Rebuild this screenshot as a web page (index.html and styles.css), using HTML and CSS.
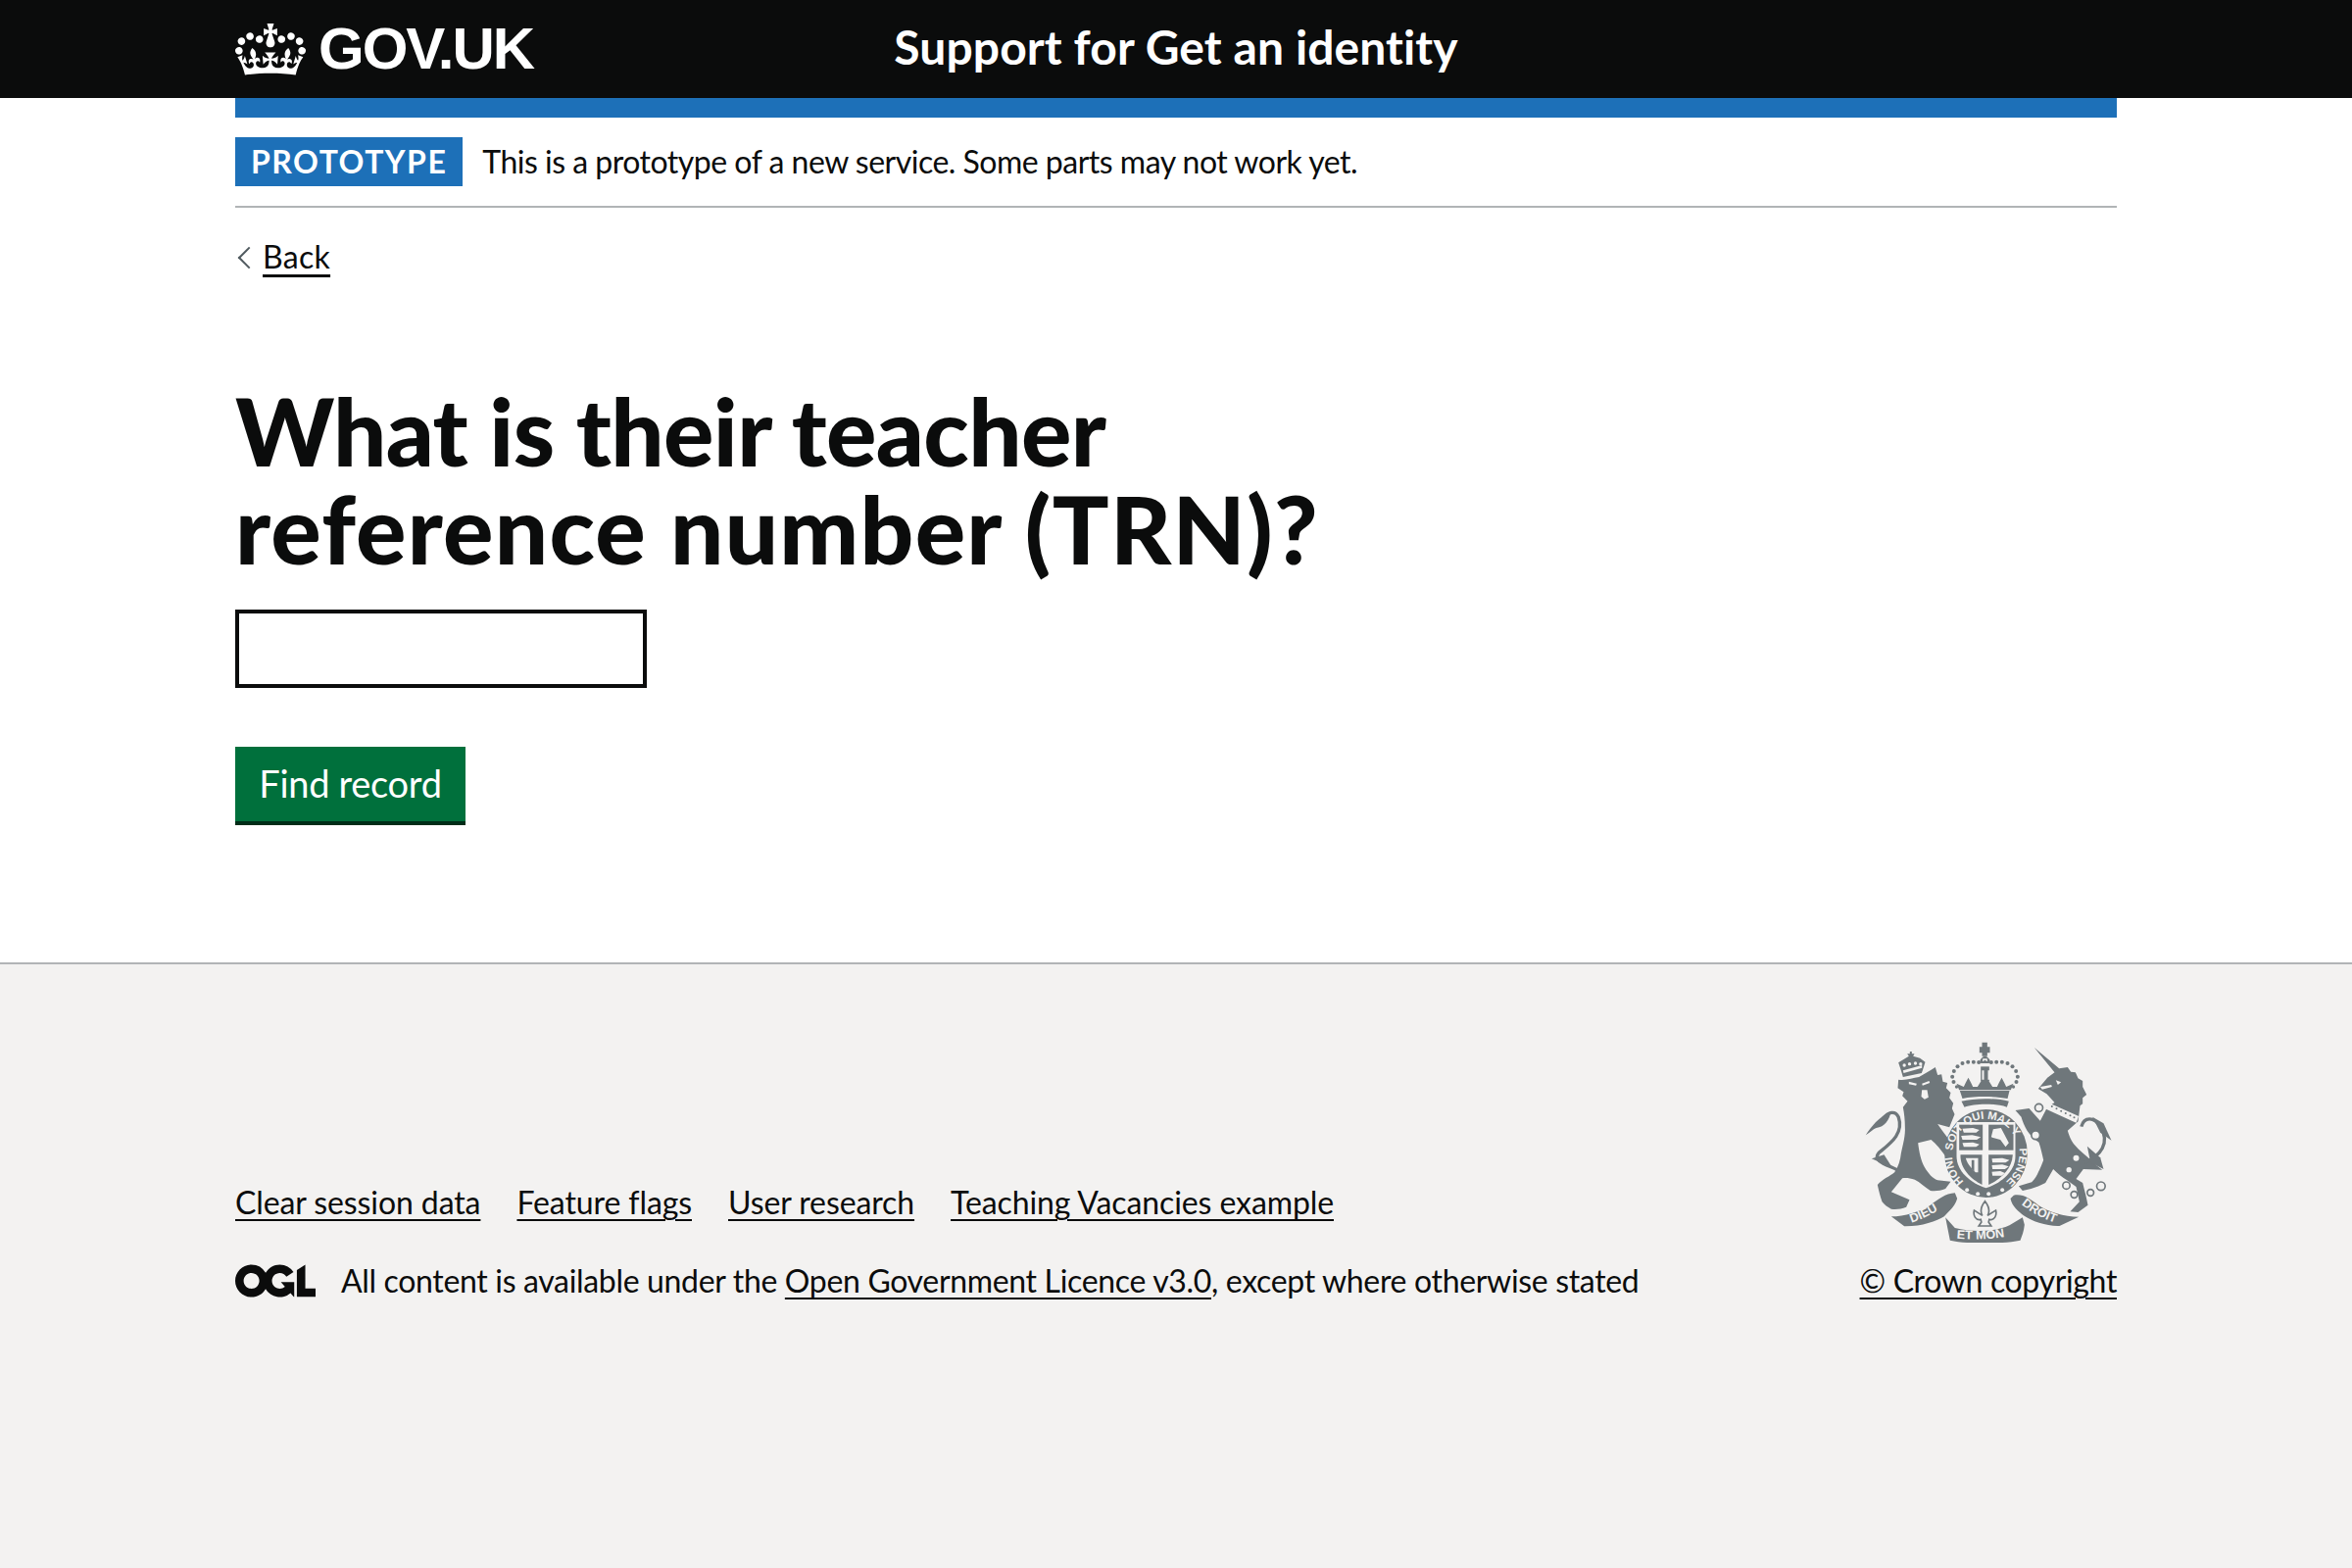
FILE: index.html
```html
<!DOCTYPE html>
<html lang="en">
<head>
<meta charset="utf-8">
<title>What is their teacher reference number (TRN)?</title>
<link rel="stylesheet" href="styles.css">
</head>
<body>
<header class="site-header">
  <div class="header-inner">
    <a class="logo" href="#">
      <svg class="crown" viewBox="0 0 132 97" aria-hidden="true"><path fill-rule="evenodd" d="M25 30.2c3.5 1.5 7.7-.2 9.1-3.7 1.5-3.6-.2-7.8-3.9-9.2-3.6-1.4-7.6.3-9.1 3.9-1.4 3.5.3 7.5 3.9 9zM9 39.5c3.6 1.5 7.8-.2 9.2-3.7 1.5-3.6-.2-7.8-3.9-9.1-3.6-1.5-7.6.2-9.1 3.8-1.4 3.5.3 7.5 3.8 9zM4.4 57.2c3.5 1.5 7.7-.2 9.1-3.8 1.5-3.6-.2-7.7-3.9-9.1-3.5-1.5-7.6.3-9.1 3.8-1.4 3.5.3 7.6 3.9 9.1zm38.3-21.4c3.5 1.5 7.7-.2 9.1-3.8 1.5-3.6-.2-7.7-3.9-9.1-3.6-1.5-7.6.3-9.1 3.8-1.3 3.6.4 7.7 3.9 9.1zm64.4-5.6c-3.6 1.5-7.8-.2-9.1-3.7-1.5-3.6.2-7.8 3.8-9.2 3.6-1.4 7.7.3 9.2 3.9 1.3 3.5-.4 7.5-3.9 9zm15.9 9.3c-3.6 1.5-7.7-.2-9.1-3.7-1.5-3.6.2-7.8 3.7-9.1 3.6-1.5 7.7.2 9.2 3.8 1.5 3.5-.3 7.5-3.8 9zm4.7 17.7c-3.6 1.5-7.8-.2-9.2-3.8-1.5-3.6.2-7.7 3.9-9.1 3.6-1.5 7.7.3 9.2 3.8 1.3 3.5-.4 7.6-3.9 9.1zM89.3 35.8c-3.6 1.5-7.8-.2-9.2-3.8-1.4-3.6.2-7.7 3.9-9.1 3.6-1.5 7.7.3 9.2 3.8 1.4 3.6-.3 7.7-3.9 9.1zM69.7 17.7l8.9 4.7V9.3l-8.9 2.8c-.2-.3-.5-.6-.9-.9L72.4 0H59.6l3.5 11.2c-.3.3-.6.5-.9.9l-8.8-2.8v13.1l8.8-4.7c.3.3.6.7.9.9l-5 15.4v.1c-.2.8-.4 1.6-.4 2.4 0 4.1 3.1 7.5 7 8.1h.2c.3 0 .7.1 1 .1.4 0 .7 0 1-.1h.2c4-.6 7.1-4.1 7.1-8.1 0-.8-.1-1.7-.4-2.4V34l-5.1-15.4c.4-.2.7-.6 1-.9zM66 92.8c16.9 0 32.8 1.1 47.1 3.2 4-16.9 8.9-26.7 14-33.5l-9.6-3.4c1 4.9 1.1 7.2 0 10.2-1.5-1.4-3-4.3-4.2-8.7L108.6 76c2.8-2 5-3.2 7.5-3.3-4.4 9.4-10 11.9-13.6 11.2-4.3-.8-6.3-4.6-5.6-7.9 1-4.7 5.7-5.9 8-.5 4.3-8.7-3-11.4-7.6-8.8 7.1-7.2 7.9-13.5 2.1-21.1-8 6.1-8.1 12.3-4.5 20.8-4.7-5.4-12.1-2.5-9.5 6.2 3.4-5.2 7.9-2 7.2 3.1-.6 4.3-6.4 7.8-13.5 7.2-10.3-.9-10.9-8-11.2-13.8 2.5-.5 7.1 1.8 11 7.3L80.2 60c-4.1 4.4-8 5.3-12.3 5.4 1.4-4.4 8-11.6 8-11.6H55.5s6.4 7.2 7.9 11.6c-4.2-.1-8-1-12.3-5.4l1.4 16.4c3.9-5.5 8.5-7.7 10.9-7.3-.3 5.8-.9 12.8-11.1 13.8-7.2.6-12.9-2.9-13.5-7.2-.7-5 3.8-8.3 7.1-3.1 2.7-8.7-4.6-11.6-9.4-6.2 3.7-8.5 3.6-14.7-4.6-20.8-5.8 7.6-5 13.9 2.2 21.1-4.7-2.6-11.9.1-7.7 8.8 2.3-5.5 7.1-4.2 8.1.5.7 3.3-1.3 7.1-5.7 7.9-3.5.7-9-1.8-13.5-11.2 2.5.1 4.7 1.3 7.5 3.3l-4.7-15.4c-1.2 4.4-2.7 7.2-4.3 8.7-1.1-3-.9-5.3 0-10.2l-9.5 3.4c5 6.9 9.9 16.7 14 33.5 14.8-2.1 30.8-3.2 47.7-3.2z"/></svg>
      <span class="logo-text">GOV.UK</span>
    </a>
    <a class="service-name" href="#">Support for Get an identity</a>
  </div>
</header>
<div class="container">
  <div class="blue-bar"></div>
  <div class="phase-banner">
    <strong class="tag">PROTOTYPE</strong>
    <span class="phase-text">This is a prototype of a new service. Some parts may not work yet.</span>
  </div>
  <a class="back-link" href="#">Back</a>
  <main class="main">
    <h1 class="heading"><label for="trn"><span class="line-one">What is their teacher</span><br><span class="line-two">reference number (TRN)?</span></label></h1>
    <input class="input" id="trn" type="text">
    <button class="button" type="button">Find record</button>
  </main>
</div>
<footer class="footer">
  <div class="footer-inner">
    <div class="footer-meta">
      <ul class="footer-links">
        <li><a class="flink" href="#">Clear session data</a></li>
        <li><a class="flink" href="#">Feature flags</a></li>
        <li><a class="flink" href="#">User research</a></li>
        <li><a class="flink" href="#">Teaching Vacancies example</a></li>
      </ul>
      <div class="licence">
        <svg class="ogl" viewBox="0 0 483.2 195.7" aria-hidden="true"><path d="M421.5 142.8V.1l-50.7 32.3v161.1h112.4v-50.7zm-122.3-9.6A47.12 47.12 0 0 1 221 97.8c0-26 21.1-47.1 47.1-47.1 16.7 0 31.4 8.7 39.7 21.8l42.7-27.2A97.63 97.63 0 0 0 268.1 0c-36.5 0-68.3 20.1-85.1 49.7A98 98 0 0 0 97.8 0C43.9 0 0 43.9 0 97.8s43.9 97.8 97.8 97.8c36.5 0 68.3-20.1 85.1-49.7a97.76 97.76 0 0 0 149.6 25.4l19.4 22.2h3v-87.8h-80l24.3 27.5zM97.8 145c-26 0-47.1-21.1-47.1-47.1s21.1-47.1 47.1-47.1 47.2 21 47.2 47S123.8 145 97.8 145"/></svg>
        <span class="licence-text">All content is available under the <a class="flink" href="#">Open Government Licence v3.0</a>, except where otherwise stated</span>
      </div>
    </div>
    <div class="copyright">
      <svg class="arms" viewBox="70 40 755 615" aria-hidden="true">
        <defs>
          <path id="ring-top" d="M338 374A102 108 0 0 1 538 356"/>
          <path id="ring-right" d="M542 366A102 110 0 0 1 486 478"/>
          <path id="ring-left" d="M372 468A102 108 0 0 1 336 388"/>
          <path id="rib-left" d="M212 594Q272 574 332 530"/>
          <path id="rib-mid" d="M350 642Q435 650 524 632"/>
          <path id="rib-right" d="M548 538Q600 580 664 598"/>
        </defs>
        <g class="a-dark">
          <!-- lion -->
          <path d="M172 156C195 160 215 150 235 148C252 138 270 128 285 118L292 142L304 140L308 162L322 166L318 182L332 196L328 212L340 228L336 244L344 262L328 302L292 292C310 318 330 342 346 368L340 396C330 400 322 398 316 390C302 372 288 352 272 340L232 350C236 380 240 402 252 424C264 444 276 458 292 464L332 468L316 490C302 496 284 498 270 496C252 484 238 470 222 462C208 458 196 456 184 458L150 500L206 524L196 546C180 552 166 554 150 552C138 546 130 540 122 530C116 512 112 496 108 478C124 460 146 452 160 440C172 422 178 402 180 382C186 354 194 326 192 300C192 280 190 260 186 240L200 222L184 206L188 194L170 182Z"/>
          <path class="a-line" d="M168 432C130 414 92 404 112 380C146 352 190 322 172 270C162 250 142 254 124 276"/>
          <path d="M72 326C88 300 112 270 150 252C144 280 130 300 104 304C94 308 84 318 72 326Z"/>
          <path d="M90 398L128 386L150 420L122 412Z"/>
          <!-- lion crown -->
          <path d="M180 128L172 104L188 94L204 84L199 77H207V70H213V77H221L217 84L238 90L254 102L246 128L243 136L186 148Z"/>
          <ellipse cx="440" cy="382" rx="127" ry="135"/>
          <!-- royal crown -->
          <path d="M428 42H444V56H452V74H444V84H428V74H420V56H428Z"/>
          <path d="M422 96Q437 72 452 96L450 106H424Z"/>
          <path d="M424 116H450V160H424Z"/>
          <path d="M358 188L350 168L372 178L378 165L386 150L394 165L400 178L414 178L422 165L437 140L452 165L460 178L474 178L480 165L488 150L496 165L502 178L524 168L516 188Z"/>
          <path d="M360 190H512L506 214C470 206 405 206 368 214Z"/>
          <path d="M365 222C405 212 470 212 510 222L504 240C470 228 405 228 374 240Z"/>
          <!-- unicorn -->
          <path d="M588 58L664 122L690 118L700 132L714 134L722 152L736 160L736 178L748 202L736 212L736 230L728 236L722 284L690 312C694 326 700 340 708 352C718 364 728 374 738 382C752 394 766 406 778 418L796 432L738 430L716 460L736 472C742 496 748 518 752 540L722 562L698 560L726 530L716 484L688 464C672 454 658 442 646 430L622 472C608 480 592 486 578 490L552 496L540 482L580 470C590 460 596 450 600 440C606 428 612 414 616 402C612 384 608 366 602 348C588 338 576 326 566 312C558 298 552 284 548 270L530 250L572 244L606 282L628 240L650 226L626 200L600 184L628 150L650 134Z"/>
          <path class="a-line" d="M742 410C790 390 822 350 790 300C770 268 740 270 732 300"/>
          <path d="M766 270L800 290L824 342L790 318Z"/>
          <path d="M750 360L790 395L800 430L760 410Z"/>
          <!-- ribbons -->
          <path d="M150 575C190 575 240 560 270 540C295 522 315 505 345 503L352 520C345 545 325 560 312 575C290 590 240 606 190 605Z"/>
          <path d="M316 578L345 610C400 624 470 622 512 602L552 578L558 600C556 620 550 635 545 648C480 660 390 660 330 648Z"/>
          <path d="M724 576C680 576 630 560 600 540C575 522 555 505 525 510L515 520C520 545 540 560 555 572C580 590 630 606 665 604Z"/>
        </g>
        <path class="a-outline" d="M437 528C450 545 452 560 445 572L470 556C474 572 466 588 450 584L448 592L456 604H418L426 592L424 584C408 588 400 572 404 556L429 572C422 560 424 545 437 528Z"/>
        <g class="a-light">
          <circle cx="726" cy="350" r="9"/><circle cx="716" cy="396" r="9"/><circle cx="694" cy="432" r="8"/>
          <!-- faces -->
          <path d="M204 162L228 168L226 174L204 170ZM266 160L244 168L246 174L268 166ZM244 188H260L264 210L252 216L242 208Z"/>
          <path d="M606 178L640 172L642 178L612 186ZM654 158L670 164L660 172Z"/>
          <circle cx="190" cy="112" r="5"/><circle cx="206" cy="108" r="5"/><circle cx="224" cy="106" r="5"/><circle cx="240" cy="108" r="5"/>
          <path d="M186 128L244 112V120L188 136Z"/>
          <path d="M452 128H446V156H452ZM428 128H434V156H428ZM430 92H444V100H430Z"/>
          <path d="M350 286H530V390C530 436 488 472 440 488C392 472 350 436 350 390Z"/>
          <circle cx="382" cy="494" r="6"/><circle cx="415" cy="506" r="6"/><circle cx="448" cy="506" r="6"/><circle cx="490" cy="494" r="6"/>
          <!-- unicorn collar -->
          <path d="M630 226L724 268L716 288L624 246Z"/>
        </g>
        <g class="a-dark">
          <circle cx="642" cy="238" r="3"/><circle cx="656" cy="245" r="3"/><circle cx="670" cy="252" r="3"/><circle cx="684" cy="259" r="3"/><circle cx="698" cy="266" r="3"/><circle cx="710" cy="272" r="3"/>
          <path d="M358 294H430V372H358Z"/><path d="M448 294H524V372H448Z"/>
          <path d="M362 386C360 430 396 462 428 478V386Z"/><path d="M448 386H522C520 430 484 462 448 478Z"/>
        </g>
        <g class="a-light">
          <path d="M368 306L400 304L420 310L410 318L372 318ZM364 328L398 326L424 332L412 340L368 340ZM368 350L400 348L420 354L410 362L372 362Z"/>
          <path d="M462 308L486 304L510 350L500 362L484 340L456 332Z"/>
          <path d="M378 396H416V440H408C398 430 384 416 378 396Z"/>
          <path d="M458 398L490 396L512 402L500 410L460 410ZM458 418L490 416L510 422L498 430L460 430ZM458 438L484 436L498 442L488 450L460 450Z"/>
        </g>
        <g class="a-dark">
          <path d="M396 402L404 402L404 438L396 428Z"/>
          <circle cx="437" cy="100" r="4"/><circle cx="418" cy="103" r="6"/><circle cx="456" cy="103" r="6"/>
          <circle cx="402" cy="102" r="6"/><circle cx="385" cy="102" r="6"/><circle cx="368" cy="106" r="6"/><circle cx="353" cy="116" r="6"/><circle cx="342" cy="130" r="6"/><circle cx="337" cy="147" r="6"/><circle cx="341" cy="163" r="6"/><circle cx="350" cy="178" r="5"/>
          <circle cx="472" cy="102" r="6"/><circle cx="489" cy="102" r="6"/><circle cx="506" cy="106" r="6"/><circle cx="521" cy="116" r="6"/><circle cx="532" cy="130" r="6"/><circle cx="537" cy="147" r="6"/><circle cx="533" cy="163" r="6"/><circle cx="524" cy="178" r="5"/>
        </g>
        <g class="a-rings">
          <circle cx="686" cy="480" r="11"/><circle cx="710" cy="508" r="10"/><circle cx="760" cy="502" r="10"/><circle cx="792" cy="482" r="13"/>
        </g>
        <circle class="a-outline" cx="602" cy="242" r="12"/>
        <circle class="a-outline" cx="592" cy="326" r="13"/>
        <text class="a-text"><textPath href="#ring-top">SOIT QUI MAL Y</textPath></text>
        <text class="a-text"><textPath href="#ring-right">PENSE</textPath></text>
        <text class="a-text"><textPath href="#ring-left">HONI</textPath></text>
        <text class="a-text rib"><textPath href="#rib-left">DIEU</textPath></text>
        <text class="a-text rib"><textPath href="#rib-mid">ET MON</textPath></text>
        <text class="a-text rib"><textPath href="#rib-right">DROIT</textPath></text>
      </svg>
      <a class="flink copy-link" href="#">© Crown copyright</a>
    </div>
  </div>
</footer>
</body>
</html>
```

FILE: styles.css
```css
* { box-sizing: border-box; }
html, body { margin: 0; padding: 0; }
body {
  min-height: 1600px;
  display: flex;
  flex-direction: column;
  background: #fff;
  color: #0b0c0c;
  font-family: Lato, "Liberation Sans", sans-serif;
  font-size: 32px;
  line-height: 40px;
  font-variant-ligatures: none;
}
a { color: #0b0c0c; }

.site-header { background: #0b0c0c; height: 100px; }
.header-inner {
  width: 1920px;
  margin: 0 auto;
  height: 100px;
  display: grid;
  grid-template-columns: 1fr auto 1fr;
  align-items: center;
}
.logo {
  display: flex;
  align-items: center;
  gap: 13px;
  color: #fff;
  text-decoration: none;
}
.crown { width: 72px; height: 53px; fill: #fff; flex: none; }
.logo-text {
  font-family: "Liberation Sans", sans-serif;
  font-weight: 700;
  font-size: 60px;
  line-height: 60px;
  letter-spacing: -2px;
}
.service-name {
  color: #fff;
  text-decoration: none;
  font-weight: 700;
  font-size: 48px;
  line-height: 56px;
  padding-bottom: 4px;
  letter-spacing: 0.1px;
}

.container { width: 1920px; margin: 0 auto; }
.blue-bar { height: 20px; background: #1d70b8; }
.phase-banner {
  display: flex;
  align-items: center;
  gap: 20px;
  height: 92px;
  border-bottom: 2px solid #b1b4b6;
}
.tag {
  display: block;
  height: 50px;
  padding: 0 16px;
  background: #1d70b8;
  color: #fff;
  font-weight: 700;
  font-size: 32px;
  line-height: 50px;
  letter-spacing: 1.5px;
}
.phase-text { letter-spacing: -0.5px; }
.back-link {
  display: inline-block;
  position: relative;
  margin-top: 30px;
  padding-left: 28px;
  font-size: 32px;
  line-height: 40px;
  letter-spacing: 0.3px;
  text-decoration-thickness: 3px;
  text-underline-offset: 6px;
}
.back-link::before {
  content: "";
  position: absolute;
  left: 6px;
  top: 13px;
  width: 14px;
  height: 14px;
  border-left: 2px solid #505a5f;
  border-bottom: 2px solid #505a5f;
  transform: rotate(45deg);
}
.main { display: flex; flex-direction: column; align-items: flex-start; padding-top: 107px; padding-bottom: 140px; }
.heading {
  margin: 0 0 33px;
  font-size: 96px;
  line-height: 100px;
  font-weight: 900;
}
.line-one { letter-spacing: -0.65px; }
.line-two { letter-spacing: 1.25px; }
.input {
  display: block;
  width: 420px;
  height: 80px;
  margin: 0 0 60px;
  border: 4px solid #0b0c0c;
  border-radius: 0;
  background: #fff;
  padding: 10px;
  font: inherit;
}
.button {
  display: block;
  height: 80px;
  width: 235px;
  padding: 0 0 6px;
  border: 0;
  border-radius: 0;
  background: #00703c;
  box-shadow: inset 0 -4px 0 #002d18;
  color: #fff;
  font-family: inherit;
  font-size: 38px;
  line-height: 46px;
  letter-spacing: -0.3px;
  font-variant-ligatures: none;
}

.footer {
  flex: 1;
  background: #f3f2f1;
  border-top: 2px solid #b1b4b6;
  padding-top: 79px;
}
.footer-inner {
  width: 1920px;
  margin: 0 auto;
  display: flex;
  justify-content: space-between;
  align-items: flex-end;
}
.footer-links {
  list-style: none;
  margin: 0 0 40px;
  padding: 0;
  display: flex;
  gap: 37px;
  letter-spacing: -0.1px;
}
.flink { text-decoration-thickness: 2px; text-underline-offset: 5px; }
.licence { display: flex; align-items: center; gap: 26px; }
.licence-text { letter-spacing: -0.33px; }
.copy-link { letter-spacing: -0.35px; }
.ogl { width: 82px; height: 34px; fill: #0b0c0c; flex: none; }
.copyright { display: flex; flex-direction: column; align-items: center; gap: 19px; }
.arms { width: 252px; height: 205px; display: block; }
.a-dark { fill: #6f777b; }
.a-light { fill: #f3f2f1; }
.a-line { fill: none; stroke: #6f777b; stroke-width: 10; }
.a-rings { fill: none; stroke: #6f777b; stroke-width: 5; }
.a-outline { fill: #f3f2f1; stroke: #6f777b; stroke-width: 5; }
.a-text {
  fill: #f3f2f1;
  font-family: "Liberation Sans", sans-serif;
  font-size: 34px;
  font-weight: 700;
}
.rib { font-size: 38px; }
```
